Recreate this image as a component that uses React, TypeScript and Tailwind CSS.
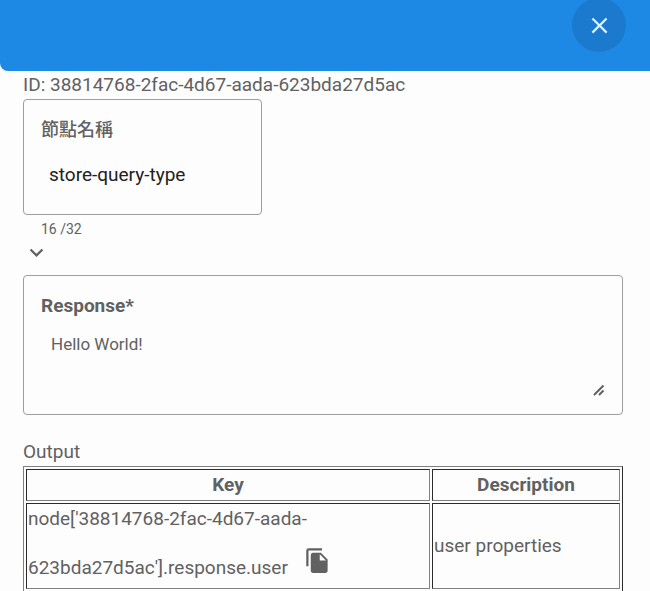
import React, { useState } from 'react';
import { MdClose, MdExpandMore, MdFileCopy } from 'react-icons/md';

const NODE_ID = '38814768-2fac-4d67-aada-623bda27d5ac';
const NAME_MAX_LENGTH = 32;

interface OutputRow {
  id: string;
  key: string;
  description: string;
}

const OUTPUT_ROWS: OutputRow[] = [
  { id: 'user', key: `node['${NODE_ID}'].response.user`, description: 'user properties' },
];

// --- Dialog Header ---
const DialogHeader: React.FC = () => (
  <header className="flex h-[71px] items-start justify-end rounded-bl-lg bg-[#1e88e5] pr-6">
    <button
      type="button"
      aria-label="Close"
      className="-mt-0.5 flex size-[54px] items-center justify-center rounded-full bg-[#1b7acd] text-[#e3f2fd]"
    >
      <MdClose size={27} />
    </button>
  </header>
);

// --- Name Field ---
const NameField: React.FC = () => {
  const [name, setName] = useState('store-query-type');

  return (
    <div>
      <div className="w-[239px] rounded border border-[#9e9e9e] px-[17px] pt-4 pb-6">
        <label htmlFor="node-name" className="block text-lg leading-7 font-medium">節點名稱</label>
        <input
          id="node-name"
          value={name}
          maxLength={NAME_MAX_LENGTH}
          onChange={e => setName(e.target.value)}
          className="mt-3.5 block h-8 w-full px-2 text-[19px] text-[#212121] outline-none"
        />
      </div>
      <p className="px-[18px] pt-1 text-sm">{name.length} /{NAME_MAX_LENGTH}</p>
    </div>
  );
};

// --- Response Field ---
const ResponseField: React.FC = () => {
  const [response, setResponse] = useState('Hello World!');

  return (
    <div className="rounded border border-[#9e9e9e] px-[17px] pt-4 pb-4">
      <label htmlFor="response" className="block leading-7 font-bold">Response*</label>
      <div className="relative mt-2">
        <textarea
          id="response"
          value={response}
          onChange={e => setResponse(e.target.value)}
          className="block h-[70px] w-full resize-none px-2.5 py-1 text-[17px] leading-6 outline-none"
        />
        <svg viewBox="0 0 12 12" className="pointer-events-none absolute right-0 bottom-0.5 size-3" aria-hidden="true">
          <path d="M1 11 10.5 1.5M6 11 10.5 6.5" stroke="currentColor" strokeWidth="2" fill="none" />
        </svg>
      </div>
    </div>
  );
};

// --- Output Table ---
const CELL = 'border border-t-[#2b2b2b] border-l-[#2b2b2b] border-r-[#808080] border-b-[#808080] p-px';

const OutputTable: React.FC = () => (
  <table className="w-full border-separate border-spacing-0.5 border border-t-[#808080] border-l-[#808080] border-r-[#2b2b2b] border-b-[#2b2b2b]">
    <thead>
      <tr className="h-8">
        <th className={CELL}>Key</th>
        <th className={`${CELL} w-[188px]`}>Description</th>
      </tr>
    </thead>
    <tbody>
      {OUTPUT_ROWS.map(row => (
        <tr key={row.id}>
          <td className={CELL}>
            <span className="mr-4">{row.key}</span>
            <button type="button" aria-label="Copy key" className="inline-flex h-[54px] items-center align-baseline">
              <MdFileCopy size={27} />
            </button>
          </td>
          <td className={CELL}>{row.description}</td>
        </tr>
      ))}
      <tr className="h-8">
        <td className={CELL}></td>
        <td className={CELL}></td>
      </tr>
    </tbody>
  </table>
);

// --- Main App Component ---
const App: React.FC = () => (
  <div className="h-screen overflow-hidden bg-[#fdfdfd] font-['Roboto','Noto_Sans_CJK_TC',sans-serif] text-[19px] leading-7 text-[#616161]">
    <DialogHeader />
    <main className="pr-[27px] pl-[23px]">
      <p>ID: {NODE_ID}</p>
      <NameField />
      <button type="button" aria-label="Expand" className="flex">
        <MdExpandMore size={27} />
      </button>
      <div className="mt-[9px]">
        <ResponseField />
      </div>
      <section className="mt-[23px]">
        <h2>Output</h2>
        <OutputTable />
      </section>
    </main>
  </div>
);

export default App;
